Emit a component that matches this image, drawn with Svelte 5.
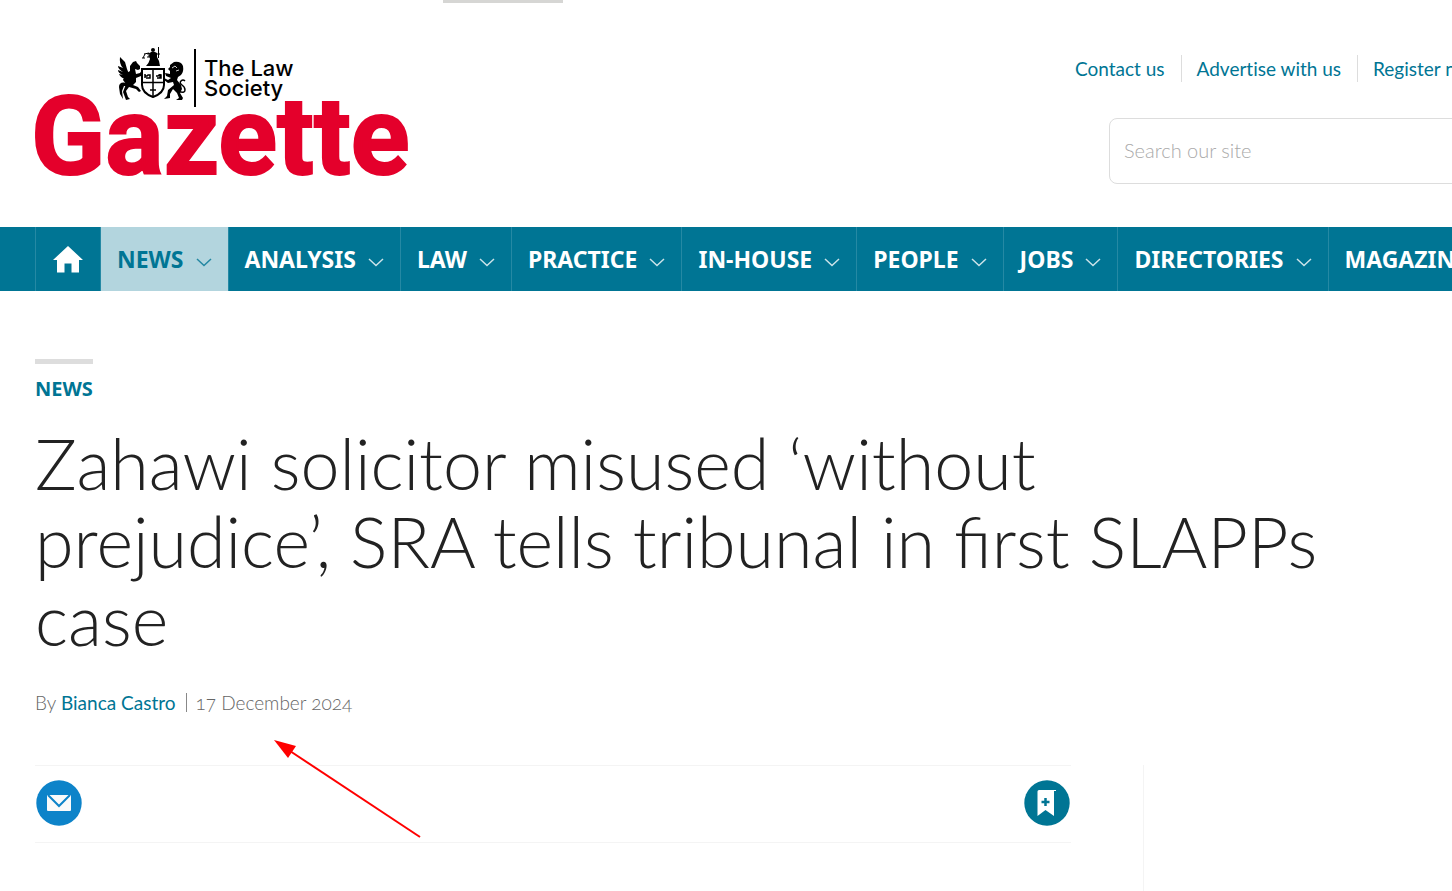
<script lang="ts">
    let search = "";

    const topLinks = ["Contact us", "Advertise with us", "Register now"];

    const sections = [
        "News",
        "Analysis",
        "Law",
        "Practice",
        "In-house",
        "People",
        "Jobs",
        "Directories",
        "Magazine",
    ];
    let current = "News";
</script>

<div class="page">
    <div class="leaderboard"></div>

    <header>
        <a class="logo" href="/" aria-label="The Law Society Gazette">
            <svg viewBox="0 0 376 140" width="376" height="140">
                <!-- justice on top of the shield -->
                <g fill="#000">
                    <path
                        d="M116 5h4l2 1v4l2 4 1 5h-14q3-3 4-7l-1-4z"
                    />
                    <circle cx="118" cy="3" r="2" />
                </g>
                <path
                    d="M123.500 0v11M121 7h4M116 6l-4 1M109 7l5-1M110 7l-2 4M114 6v4M107 11h3M112 10h3"
                    fill="none"
                    stroke="#000"
                />
                <!-- shield -->
                <path
                    d="M107 22h22v16q0 8-11 12q-11-4-11-12z"
                    fill="#fff"
                    stroke="#000"
                    stroke-width="2"
                />
                <path
                    d="M118 22v28M107 35.500h22M115 43h6M110 29h2l1-1h2v3h-4M121 29h2l1-1h2v3h-4M110 27v4M125 27v4"
                    fill="none"
                    stroke="#000"
                    stroke-width="1.500"
                />
                <!-- winged horse -->
                <g fill="#000">
                    <path
                        d="M85 10l5 5 2 7 2 5-3 4q-5 1-7-4l4 1q-5-2-5-5l5 2q-5-3-5-6l5 2q-4-4-3-11z"
                    />
                    <path
                        d="M95 19l3-4 3-1 1 2 3 3v3l-2 1-3-1 1 5 4-1 2-3 1 2-2 4-5 2v4l-3 3 5 2 3 4-2 1-3-3-7-2-3 4 2 6 2 2-4 1-3-8 3-8-3-4 2-6 5-3z"
                    />
                    <path d="M92 36q-8-2-8 4l1 7 3 5-1-8 2-5 3 0z" />
                </g>
                <!-- lion -->
                <g fill="#000">
                    <path
                        d="M135 18l4-3q7-1 9 4 1 6-2 9l-3 2-1 3 4 5 1 4-2 4 3 5-1 2h-6l3-2-2-5-4-4-3 5 0 4-6 1 3-3 1-6 6-5-1-3-5 1-4-3v-2l4 2 3-2-5-2-1-3 5 1 0-3-2-2 2-2z"
                    />
                </g>
                <path
                    d="M143 44q7 3 7-1 0-3-3-5-3-2-1-4 2-2 4 0"
                    fill="none"
                    stroke="#000"
                    stroke-width="1.500"
                />
                <path
                    d="M137 21l3-2 2 2M141 24l3-1"
                    fill="none"
                    stroke="#fff"
                    stroke-width=".8"
                />
                <path d="M160 2v58" stroke="#000" stroke-width="2" />
                <text class="society" x="169" y="29">The Law</text>
                <text class="society" x="169" y="49">Society</text>
                <text class="gazette" x="-4" y="127">Gazette</text>
            </svg>
        </a>

        <div class="tools">
            <ul class="top-links">
                {#each topLinks as link}
                    <li><a href="/">{link}</a></li>
                {/each}
            </ul>
            <form class="search">
                <input
                    type="search"
                    aria-label="Search our site"
                    placeholder="Search our site"
                    bind:value={search}
                />
            </form>
        </div>
    </header>

    <nav>
        <ul>
            <li>
                <a class="home" href="/" aria-label="Home">
                    <svg viewBox="0 0 30 27" width="30" height="27">
                        <path
                            d="M15 0l15 14h-4v12.500h-7.500v-9h-7v9H4V14H0z"
                            fill="#fff"
                        />
                    </svg>
                </a>
            </li>
            {#each sections as section}
                <li>
                    <a href="/" class:active={section === current}>
                        {section}
                        <svg
                            class="chevron"
                            viewBox="0 0 16 9"
                            width="16"
                            height="9"
                        >
                            <path d="M1 1l7 6.500L15 1" />
                        </svg>
                    </a>
                </li>
            {/each}
        </ul>
    </nav>

    <main>
        <a class="category" href="/">News</a>
        <h1>
            Zahawi solicitor misused ‘without prejudice’, SRA tells tribunal in
            first SLAPPs case
        </h1>
        <p class="byline">
            By <a href="/">Bianca Castro</a><span class="date"
                >17 December 2024</span
            >
        </p>

        <div class="columns">
            <article>
                <div class="share">
                    <button aria-label="Email this article">
                        <svg viewBox="0 0 46 46" width="46" height="46">
                            <circle cx="23" cy="23" r="22.700" fill="#0d83c9" />
                            <rect
                                x="11"
                                y="15"
                                width="24"
                                height="16"
                                rx="1"
                                fill="#fafafa"
                            />
                            <path
                                d="M12 15l11 11 11-11"
                                fill="none"
                                stroke="#0d83c9"
                                stroke-width="2"
                            />
                        </svg>
                    </button>
                    <button aria-label="Save article">
                        <svg viewBox="0 0 46 46" width="46" height="46">
                            <circle cx="23" cy="23" r="22.700" fill="#007594" />
                            <path
                                d="M15 10h17v1h-2v25l-8.500-6-8 6V11.500q0-1.500 1.500-1.500z"
                                fill="#fff"
                            />
                            <path
                                d="M21.500 18v8M17.500 22h8"
                                stroke="#007594"
                                stroke-width="2.500"
                            />
                        </svg>
                    </button>
                </div>
            </article>
            <aside></aside>
        </div>
    </main>

    <svg class="pointer" viewBox="0 0 148 100" width="148" height="100">
        <path d="M146 97L16 11" stroke="#f00" stroke-width="2" />
        <path d="M0 0l22 6-8 12z" fill="#f00" />
    </svg>
</div>

<style>
    :global(body) {
        margin: 0;
        background: #fff;
    }
    .page {
        position: relative;
        min-height: 100vh;
        display: flex;
        flex-direction: column;
        overflow: hidden;
        font-family: Lato, "Open Sans", sans-serif;
        font-weight: 300;
        font-size: 20px;
        color: #222;
    }
    a {
        color: #007594;
        text-decoration: none;
    }
    ul {
        list-style: none;
        margin: 0;
        padding: 0;
    }
    .leaderboard {
        width: 120px;
        height: 3px;
        margin-left: 443px;
        background: #d6d6d4;
    }

    header {
        display: flex;
        justify-content: space-between;
        height: 180px;
        padding: 44px 0 0 35px;
        box-sizing: content-box;
    }
    .logo svg {
        display: block;
        overflow: visible;
    }
    .society {
        font: 500 22px Inter, sans-serif;
    }
    .gazette {
        font: 700 109px Roboto, sans-serif;
        fill: #e4002b;
        stroke: #e4002b;
        stroke-width: 2;
    }
    .tools {
        width: 377px;
        padding-top: 8px;
    }
    .top-links {
        display: flex;
        white-space: nowrap;
        font-size: 19px;
        font-weight: 400;
        font-variant-ligatures: none;
    }
    .top-links li {
        line-height: 27px;
        padding-right: 16px;
        margin-right: 15px;
        border-right: 1px solid #ddd;
    }
    .search {
        margin: 36px 0 0 34px;
    }
    .search input {
        width: 500px;
        height: 66px;
        box-sizing: border-box;
        padding: 0 14px 2px;
        border: 1px solid #ddd;
        border-radius: 8px;
        background: #fff;
        font: inherit;
        appearance: none;
    }
    .search input::placeholder {
        color: #aaa;
    }

    nav {
        background: #007594;
        padding-left: 35px;
    }
    nav ul {
        display: flex;
    }
    nav li {
        border-left: 1px solid #2589a4;
    }
    nav a {
        display: flex;
        align-items: center;
        gap: 12px;
        height: 63px;
        padding: 0 16px 1px;
        color: #fff;
        font: 700 23px "Noto Sans", sans-serif;
        text-transform: uppercase;
        white-space: nowrap;
    }
    nav a.active {
        background: #b3d5de;
        color: #007594;
    }
    .home svg {
        margin: 1px 1px 0;
    }
    .chevron {
        margin-top: 8px;
        fill: none;
        stroke: currentColor;
        stroke-width: 1.5;
        opacity: 0.8;
    }

    main {
        flex: 1;
        display: flex;
        flex-direction: column;
        align-items: flex-start;
        padding: 68px 0 0 35px;
    }
    .category {
        border-top: 5px solid #ddd;
        padding-top: 11px;
        font: 700 20px/27px "Noto Sans", sans-serif;
        text-transform: uppercase;
    }
    h1 {
        margin: 22px 117px 0 0;
        font-size: 70px;
        line-height: 78px;
        font-weight: 300;
    }
    .byline {
        margin: 31px 0 0;
        font-size: 19px;
        line-height: 28px;
        color: #666;
        font-variant-numeric: oldstyle-nums;
    }
    .byline a {
        font-weight: 400;
    }
    .date {
        display: inline-block;
        line-height: 19px;
        margin-left: 10px;
        padding-left: 9px;
        border-left: 1px solid #888;
    }
    .columns {
        flex: 1;
        align-self: stretch;
        display: grid;
        grid-template-columns: 1fr 309px;
        gap: 72px;
        margin-top: 48px;
    }
    .share {
        display: flex;
        justify-content: space-between;
        padding: 14px 1px 16px;
        border: solid #f4f4f4;
        border-width: 1px 0;
    }
    .share button {
        padding: 0;
        border: 0;
        background: none;
        cursor: pointer;
    }
    .share svg {
        display: block;
    }
    aside {
        border-left: 1px solid #f4f4f4;
    }
    .pointer {
        position: absolute;
        left: 274px;
        top: 740px;
        pointer-events: none;
    }
</style>
